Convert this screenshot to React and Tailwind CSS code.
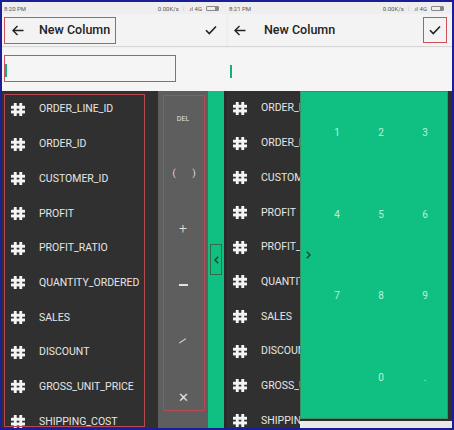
const COLUMNS = [
  "ORDER_LINE_ID",
  "ORDER_ID",
  "CUSTOMER_ID",
  "PROFIT",
  "PROFIT_RATIO",
  "QUANTITY_ORDERED",
  "SALES",
  "DISCOUNT",
  "GROSS_UNIT_PRICE",
  "SHIPPING_COST",
];

const KEYS = ["1", "2", "3", "4", "5", "6", "7", "8", "9", "", "0", "."];

function HashIcon() {
  return (
    <svg width="14" height="13" viewBox="0 0 14 13" className="shrink-0">
      <rect x="2.8" y="0" width="2.9" height="13" fill="#f4f4f4" />
      <rect x="8.3" y="0" width="2.9" height="13" fill="#f4f4f4" />
      <rect x="0" y="2.8" width="14" height="2.9" fill="#f4f4f4" />
      <rect x="0" y="7.5" width="14" height="2.9" fill="#f4f4f4" />
    </svg>
  );
}

function BackArrow() {
  return (
    <svg width="12" height="11" viewBox="0 0 12 11" fill="none" stroke="#222" strokeWidth="1.4">
      <path d="M11.5 5.5H1M5.5 1L1 5.5L5.5 10" />
    </svg>
  );
}

function Check() {
  return (
    <svg width="12" height="10" viewBox="0 0 12 10" fill="none" stroke="#222" strokeWidth="1.6">
      <path d="M1 5.2L4.3 8.5L11 1.5" />
    </svg>
  );
}

function StatusBar({ time }) {
  return (
    <div className="h-[12px] shrink-0 flex items-center justify-between px-[2px] bg-[#eeeeee] text-[6px] text-[#555]">
      <span>{time}</span>
      <div className="flex items-center gap-[4px] pr-[6px]">
        <span>0.00K/s</span>
        <span className="text-[#aaa]">⁞</span>
        <span>.ıl 4G</span>
        <span className="w-[13px] h-[5px] border border-[#888] rounded-[1px] flex justify-end">
          <span className="w-[3px] bg-[#888]" />
        </span>
      </div>
    </div>
  );
}

function ColumnRow({ name }) {
  return (
    <div className="h-[34.7px] shrink-0 flex items-center gap-[14px] pl-[9px]">
      <HashIcon />
      <span className="text-[10.5px] text-[#e6e6e6] whitespace-nowrap">{name}</span>
    </div>
  );
}

function LeftPanel() {
  return (
    <div className="w-[225px] flex flex-col bg-[#f3f3f3]">
      <StatusBar time="8:20 PM" />
      <div className="h-[32px] shrink-0 flex items-center px-[2px] shadow-[0_1px_1px_rgba(0,0,0,0.12)] relative z-10">
        <div className="w-[112px] h-[27px] border border-[#d0505a] flex items-center">
          <div className="w-[24px] flex justify-center pl-[2px]">
            <BackArrow />
          </div>
          <span className="ml-[10px] text-[12.5px] font-medium text-[#222] whitespace-nowrap">New Column</span>
        </div>
        <div className="ml-auto mr-[8px]">
          <Check />
        </div>
      </div>
      <div className="h-[45px] shrink-0 pt-[9px] px-[2px] bg-[#f5f5f5]">
        <div className="w-[172px] h-[27px] border border-[#d0505a] flex items-center">
          <span className="w-[1.5px] h-[13px] bg-[#13b07a] mt-[4px]" />
        </div>
      </div>
      <div className="flex-1 min-h-0 overflow-hidden flex bg-[#303030]">
        <div className="w-[156px] relative pt-[1px]">
          {COLUMNS.map((c) => (
            <ColumnRow key={c} name={c} />
          ))}
          <div className="absolute left-[2px] top-[3px] w-[141px] h-[333px] border border-[#b54a52]" />
        </div>
        <div className="w-[50px] bg-[#5e5e5e] relative flex flex-col text-[#e2e2e2]">
          <div className="h-[56px] shrink-0 flex items-center justify-center text-[7px] pt-[1px]">DEL</div>
          <div className="h-[53px] shrink-0 flex items-center justify-center gap-[17px] text-[9px] pl-[2px]">
            <span>(</span>
            <span>)</span>
          </div>
          <div className="h-[57px] shrink-0 flex items-center justify-center text-[14px] font-light">+</div>
          <div className="h-[56px] shrink-0 flex items-center justify-center">
            <span className="w-[9px] h-[1.5px] bg-[#e2e2e2]" />
          </div>
          <div className="h-[56px] shrink-0 flex items-center justify-center">
            <span className="w-[1.3px] h-[8px] bg-[#e2e2e2] rotate-[55deg]" />
          </div>
          <div className="h-[58px] shrink-0 flex items-center justify-center text-[13px] font-light">✕</div>
          <div className="absolute left-[5px] top-[4px] w-[42px] h-[316px] border border-[#b54a52]" />
        </div>
        <div className="w-[16px] bg-[#10c082] flex items-center justify-center">
          <div className="w-[12px] h-[31px] border border-[#2f6a4a] flex items-center justify-center">
            <svg width="5" height="8" viewBox="0 0 5 8" fill="none" stroke="#1f3a2c" strokeWidth="1.3">
              <path d="M4.2 0.7L1 4L4.2 7.3" />
            </svg>
          </div>
        </div>
        <div className="w-[3px] bg-[#2a2a2a]" />
      </div>
    </div>
  );
}

function RightPanel() {
  return (
    <div className="w-[225px] flex flex-col bg-[#f3f3f3]">
      <StatusBar time="8:21 PM" />
      <div className="h-[32px] shrink-0 flex items-center shadow-[0_1px_1px_rgba(0,0,0,0.12)] relative z-10">
        <div className="w-[24px] flex justify-center pl-[1px]">
          <BackArrow />
        </div>
        <span className="ml-[13px] text-[12.5px] font-medium text-[#222] whitespace-nowrap">New Column</span>
        <div className="ml-auto mr-[5px] w-[24px] h-[26px] border border-[#d0505a] flex items-center justify-center">
          <Check />
        </div>
      </div>
      <div className="h-[45px] shrink-0 pt-[19px] pl-[3px] bg-[#f5f5f5] flex">
        <span className="w-[1.5px] h-[13px] bg-[#13b07a]" />
      </div>
      <div className="flex-1 min-h-0 overflow-hidden flex bg-[#303030]">
        <div className="w-[73px] shrink-0 overflow-hidden">
          <div className="-ml-[3px]">
            {COLUMNS.map((c) => (
              <ColumnRow key={c} name={c} />
            ))}
          </div>
        </div>
        <div className="w-[152px] flex flex-col">
          <div className="h-[328px] shrink-0 w-[148px] bg-[#10c082] border border-[#3d8f63] flex">
            <div className="w-[14px] flex items-center justify-center">
              <svg width="5" height="8" viewBox="0 0 5 8" fill="none" stroke="#1f3a2c" strokeWidth="1.3">
                <path d="M0.8 0.7L4 4L0.8 7.3" />
              </svg>
            </div>
            <div className="flex-1 grid grid-cols-3 grid-rows-4 text-[10px] text-[#b8f3d9]">
              {KEYS.map((k, i) => (
                <div key={i} className="flex items-center justify-center">
                  {k}
                </div>
              ))}
            </div>
          </div>
          <div className="flex-1 bg-[#e9e9e9] border-t-[2px] border-[#2f2f2f]" />
        </div>
      </div>
    </div>
  );
}

export default function App() {
  return (
    <div
      className="w-[454px] h-[430px] border-2 border-[#1b1f96] flex overflow-hidden bg-[#1b1f96]"
      style={{ fontFamily: "Roboto, 'Liberation Sans', sans-serif" }}
    >
      <LeftPanel />
      <RightPanel />
    </div>
  );
}
